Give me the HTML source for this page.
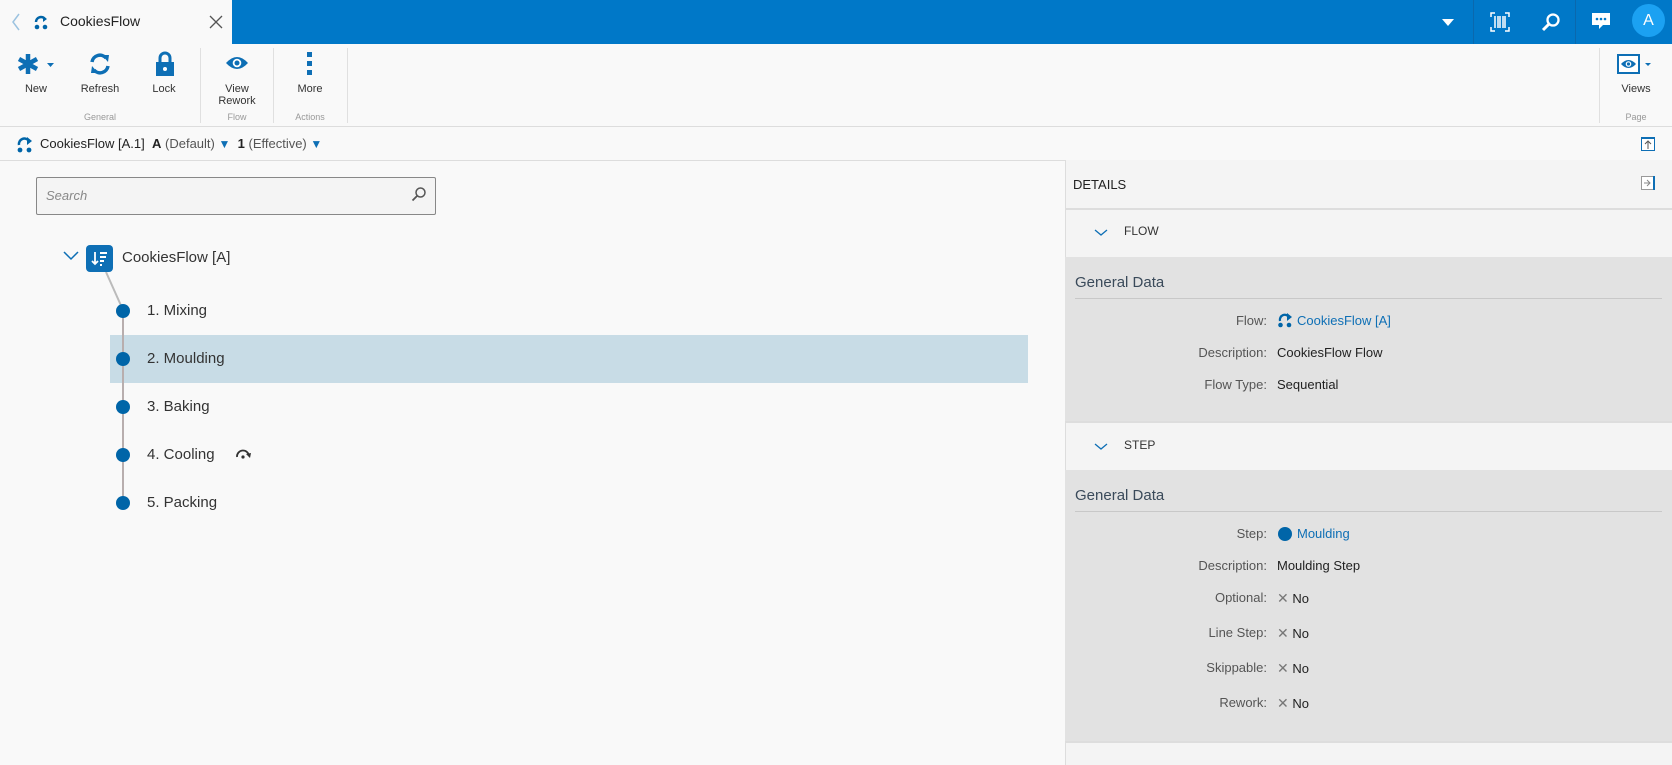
<!DOCTYPE html>
<html><head><meta charset="utf-8"><style>
*{box-sizing:border-box;margin:0;padding:0}
body{width:1672px;height:765px;overflow:hidden;background:#f9f9f9;font-family:"Liberation Sans",sans-serif;color:#333;position:relative}
.a{position:absolute}
.top{left:0;top:0;width:1672px;height:44px;background:#0078c8}
.tab{left:0;top:0;width:232px;height:44px;background:#f9f9f9}
.rib{left:0;top:44px;width:1672px;height:83px;background:#f9f9f9;border-bottom:1px solid #ddd}
.lbl{font-size:11px;color:#333;text-align:center;width:80px}
.grp{font-size:9px;color:#999;text-align:center;width:80px}
.sep{width:1px;background:#e0e0e0}
.bc{left:0;top:128px;width:1672px;height:33px;border-bottom:1px solid #ddd;background:#f9f9f9}
.step{font-size:15px;color:#333}
.dot{width:14px;height:14px;border-radius:50%;background:#0065a8}
.pan{left:1065px;top:160px;width:607px;height:605px;background:#f4f4f4;border-left:1px solid #ddd}
.k{font-size:13px;color:#555;text-align:right;width:200px}
.v{font-size:13px;color:#222}
.x{color:#777;font-size:14px}
</style></head><body>
<div class="a top"></div>
<div class="a tab"></div>
<svg class="a" style="left:11px;top:12px" width="10" height="20"><path d="M8 2 L2 10 L8 18" stroke="#9cc3e0" stroke-width="1.5" fill="none"/></svg>
<svg class="a" style="left:33px;top:14px" width="16" height="16"><path d="M3 8 A5 5 0 0 1 12 5" stroke="#0065a8" stroke-width="2.5" fill="none"/><path d="M10 2 L14 5 L10 8Z" fill="#0065a8"/><circle cx="4" cy="13" r="2.3" fill="#0065a8"/><circle cx="12" cy="13" r="2.3" fill="#0065a8"/></svg>
<div class="a" style="left:60px;top:13px;font-size:14px;color:#222">CookiesFlow</div>
<svg class="a" style="left:209px;top:15px" width="14" height="14"><path d="M1 1L13 13M13 1L1 13" stroke="#555" stroke-width="1.3"/></svg>
<svg class="a" style="left:1441px;top:17px" width="14" height="10"><path d="M1 2H13L7 9Z" fill="#fff"/></svg>
<div class="a" style="left:1473px;top:0;width:1px;height:44px;background:#0a68ad"></div>
<div class="a" style="left:1575px;top:0;width:1px;height:44px;background:#0a68ad"></div>
<svg class="a" style="left:1490px;top:12px" width="20" height="20"><path d="M1 5V1H5M15 1H19V5M19 15V19H15M5 19H1V15" stroke="#fff" stroke-width="1.5" fill="none"/><path d="M5 4V16M8 4V16M10 4V16M13 4V16M15 4V16" stroke="#fff" stroke-width="1.5"/></svg>
<svg class="a" style="left:1541px;top:12px" width="20" height="20"><circle cx="12" cy="8" r="5.5" stroke="#fff" stroke-width="2.3" fill="none"/><path d="M8 12L2 18" stroke="#fff" stroke-width="3"/></svg>
<svg class="a" style="left:1591px;top:12px" width="20" height="18"><path d="M1 1H19V13H12L8 17V13H1Z" fill="#fff"/><circle cx="6" cy="7" r="1.3" fill="#0078c8"/><circle cx="10" cy="7" r="1.3" fill="#0078c8"/><circle cx="14" cy="7" r="1.3" fill="#0078c8"/></svg>
<div class="a" style="left:1632px;top:4px;width:33px;height:33px;border-radius:50%;background:#1ba1f2;color:#fff;font-size:16px;text-align:center;line-height:33px">A</div>

<div class="a rib"></div>
<svg class="a" style="left:16px;top:52px" width="40" height="26"><path d="M12 2V22M3 7L21 17M3 17L21 7" stroke="#0e6fb5" stroke-width="4.5"/><path d="M31 11H38L34.5 15Z" fill="#0e6fb5"/></svg>
<svg class="a" style="left:88px;top:52px" width="24" height="24"><path d="M4 10A8 8 0 0 1 18 6" stroke="#0e6fb5" stroke-width="3.5" fill="none"/><path d="M14 3L21 3L20 10Z" fill="#0e6fb5"/><path d="M20 14A8 8 0 0 1 6 18" stroke="#0e6fb5" stroke-width="3.5" fill="none"/><path d="M10 21L3 21L4 14Z" fill="#0e6fb5"/></svg>
<svg class="a" style="left:155px;top:51px" width="20" height="26"><path d="M5 11V7A5 5 0 0 1 15 7V11" stroke="#0e6fb5" stroke-width="3" fill="none"/><rect x="1" y="11" width="18" height="14" fill="#0e6fb5"/><circle cx="10" cy="18" r="2" fill="#fff"/></svg>
<svg class="a" style="left:225px;top:55px" width="24" height="16"><path d="M1 8Q12 -4 23 8Q12 20 1 8Z" fill="#0e6fb5"/><circle cx="12" cy="8" r="4.3" fill="#fff"/><circle cx="12" cy="8" r="2.5" fill="#0e6fb5"/></svg>
<svg class="a" style="left:307px;top:52px" width="6" height="24"><rect x="0" y="0" width="5" height="5" fill="#0e6fb5"/><rect x="0" y="9" width="5" height="5" fill="#0e6fb5"/><rect x="0" y="18" width="5" height="5" fill="#0e6fb5"/></svg>
<div class="a lbl" style="left:-4px;top:83px">New</div>
<div class="a lbl" style="left:60px;top:83px">Refresh</div>
<div class="a lbl" style="left:124px;top:83px">Lock</div>
<div class="a lbl" style="left:197px;top:83px;line-height:12px">View<br>Rework</div>
<div class="a lbl" style="left:270px;top:83px">More</div>
<div class="a grp" style="left:60px;top:112px">General</div>
<div class="a grp" style="left:197px;top:112px">Flow</div>
<div class="a grp" style="left:270px;top:112px">Actions</div>
<div class="a sep" style="left:200px;top:48px;height:75px"></div>
<div class="a sep" style="left:273px;top:48px;height:75px"></div>
<div class="a sep" style="left:347px;top:48px;height:75px"></div>
<div class="a sep" style="left:1599px;top:48px;height:75px"></div>
<svg class="a" style="left:1617px;top:54px" width="40" height="20"><rect x="1" y="1" width="21" height="18" stroke="#0e6fb5" stroke-width="2" fill="#fff"/><path d="M4 10Q11.5 2 19 10Q11.5 18 4 10Z" fill="#0e6fb5"/><circle cx="11.5" cy="10" r="2.8" fill="#fff"/><circle cx="11.5" cy="10" r="1.6" fill="#0e6fb5"/><path d="M28 9H34L31 12Z" fill="#0e6fb5"/></svg>
<div class="a lbl" style="left:1596px;top:83px">Views</div>
<div class="a grp" style="left:1596px;top:112px">Page</div>

<div class="a bc"></div>
<svg class="a" style="left:16px;top:136px" width="18" height="17"><path d="M3 9A5.5 5.5 0 0 1 13 5" stroke="#0065a8" stroke-width="2.5" fill="none"/><path d="M11 1L16 5L11 9Z" fill="#0065a8"/><circle cx="4" cy="14" r="2.4" fill="#0065a8"/><circle cx="13" cy="14" r="2.4" fill="#0065a8"/></svg>
<div class="a" style="left:40px;top:136px;font-size:13px;color:#222;white-space:nowrap">CookiesFlow [A.1] &nbsp;<b>A</b> <span style="color:#555">(Default)</span> <span style="color:#0e6fb5;font-size:12px">▼</span> &nbsp;<b>1</b> <span style="color:#555">(Effective)</span> <span style="color:#0e6fb5;font-size:12px">▼</span></div>
<svg class="a" style="left:1641px;top:137px" width="14" height="14"><rect x="0.5" y="0.5" width="13" height="13" fill="#fff" stroke="#0e6fb5"/><rect x="0" y="0" width="14" height="2" fill="#0e6fb5"/><path d="M7 12V5M4 7L7 4L10 7" stroke="#555" fill="none"/></svg>

<div class="a" style="left:36px;top:177px;width:400px;height:38px;border:1px solid #888;border-radius:2px;background:#f4f4f4"></div>
<div class="a" style="left:46px;top:188px;font-size:13px;color:#888;font-style:italic">Search</div>
<svg class="a" style="left:411px;top:186px" width="16" height="16"><circle cx="9.5" cy="6.5" r="4.5" stroke="#555" stroke-width="1.5" fill="none"/><path d="M6 10L1.5 14.5" stroke="#555" stroke-width="1.8"/></svg>

<svg class="a" style="left:63px;top:251px" width="16" height="10"><path d="M1 1L8 8L15 1" stroke="#0e6fb5" stroke-width="1.5" fill="none"/></svg>
<div class="a" style="left:110px;top:335px;width:918px;height:48px;background:#c8dce6"></div>
<svg class="a" style="left:100px;top:260px" width="30" height="250"><path d="M6 12L23 50" stroke="#bbb" stroke-width="2"/><path d="M23 50V245" stroke="#b8aeae" stroke-width="2"/></svg>
<div class="a" style="left:86px;top:245px;width:27px;height:27px;border-radius:4px;background:#0e6fb5"></div>
<svg class="a" style="left:91px;top:250px" width="17" height="17"><path d="M4 2V14M1 11L4 14L7 11" stroke="#fff" stroke-width="1.8" fill="none"/><path d="M9 3H16M9 7H15M9 11H13M9 15H11" stroke="#fff" stroke-width="2"/></svg>
<div class="a step" style="left:122px;top:249px">CookiesFlow [A]</div>
<div class="a dot" style="left:116px;top:304px"></div><div class="a step" style="left:147px;top:302px">1. Mixing</div>
<div class="a dot" style="left:116px;top:352px"></div><div class="a step" style="left:147px;top:350px">2. Moulding</div>
<div class="a dot" style="left:116px;top:400px"></div><div class="a step" style="left:147px;top:398px">3. Baking</div>
<div class="a dot" style="left:116px;top:448px"></div><div class="a step" style="left:147px;top:446px">4. Cooling</div>
<svg class="a" style="left:235px;top:448px" width="16" height="12"><path d="M2 9A6 6 0 0 1 14 8" stroke="#333" stroke-width="1.8" fill="none"/><path d="M11 6L15 10L16 5Z" fill="#333"/><circle cx="8" cy="9" r="1.6" fill="#333"/></svg>
<div class="a dot" style="left:116px;top:496px"></div><div class="a step" style="left:147px;top:494px">5. Packing</div>

<div class="a pan"></div>
<div class="a" style="left:1065px;top:208px;width:607px;height:2px;background:#ddd"></div>
<div class="a" style="left:1073px;top:177px;font-size:13px;color:#222">DETAILS</div>
<svg class="a" style="left:1641px;top:176px" width="14" height="14"><rect x="0.5" y="0.5" width="12" height="13" fill="#fff" stroke="#999"/><rect x="12" y="0" width="2" height="14" fill="#0e6fb5"/><path d="M3 7H9M6 4L9 7L6 10" stroke="#888" fill="none"/></svg>
<svg class="a" style="left:1094px;top:229px" width="14" height="8"><path d="M1 1L7 6L13 1" stroke="#0e6fb5" stroke-width="1.3" fill="none"/></svg>
<div class="a" style="left:1124px;top:224px;font-size:12px;color:#333">FLOW</div>
<div class="a" style="left:1065px;top:257px;width:607px;height:165px;background:#e2e2e2"></div>
<div class="a" style="left:1075px;top:274px;font-size:15px;color:#3a4a5a">General Data</div>
<div class="a" style="left:1075px;top:298px;width:587px;height:1px;background:#c8c8c8"></div>
<div class="a k" style="left:1067px;top:313px">Flow:</div>
<svg class="a" style="left:1277px;top:313px" width="16" height="15"><path d="M3 8A5 5 0 0 1 12 4" stroke="#0065a8" stroke-width="2.3" fill="none"/><path d="M10 0L15 4L10 8Z" fill="#0065a8"/><circle cx="3.5" cy="12" r="2.3" fill="#0065a8"/><circle cx="12" cy="12" r="2.3" fill="#0065a8"/></svg>
<div class="a v" style="left:1297px;top:313px;color:#0e6fb5">CookiesFlow [A]</div>
<div class="a k" style="left:1067px;top:345px">Description:</div><div class="a v" style="left:1277px;top:345px">CookiesFlow Flow</div>
<div class="a k" style="left:1067px;top:377px">Flow Type:</div><div class="a v" style="left:1277px;top:377px">Sequential</div>
<div class="a" style="left:1065px;top:421px;width:607px;height:2px;background:#ddd"></div>
<svg class="a" style="left:1094px;top:443px" width="14" height="8"><path d="M1 1L7 6L13 1" stroke="#0e6fb5" stroke-width="1.3" fill="none"/></svg>
<div class="a" style="left:1124px;top:438px;font-size:12px;color:#333">STEP</div>
<div class="a" style="left:1065px;top:470px;width:607px;height:272px;background:#e2e2e2"></div>
<div class="a" style="left:1075px;top:487px;font-size:15px;color:#3a4a5a">General Data</div>
<div class="a" style="left:1075px;top:511px;width:587px;height:1px;background:#c8c8c8"></div>
<div class="a k" style="left:1067px;top:526px">Step:</div>
<div class="a dot" style="left:1278px;top:527px;width:14px;height:14px"></div>
<div class="a v" style="left:1297px;top:526px;color:#0e6fb5">Moulding</div>
<div class="a k" style="left:1067px;top:558px">Description:</div><div class="a v" style="left:1277px;top:558px">Moulding Step</div>
<div class="a k" style="left:1067px;top:590px">Optional:</div><div class="a v" style="left:1277px;top:590px"><span class="x">✕</span> No</div>
<div class="a k" style="left:1067px;top:625px">Line Step:</div><div class="a v" style="left:1277px;top:625px"><span class="x">✕</span> No</div>
<div class="a k" style="left:1067px;top:660px">Skippable:</div><div class="a v" style="left:1277px;top:660px"><span class="x">✕</span> No</div>
<div class="a k" style="left:1067px;top:695px">Rework:</div><div class="a v" style="left:1277px;top:695px"><span class="x">✕</span> No</div>
<div class="a" style="left:1065px;top:741px;width:607px;height:2px;background:#ddd"></div>
</body></html>
